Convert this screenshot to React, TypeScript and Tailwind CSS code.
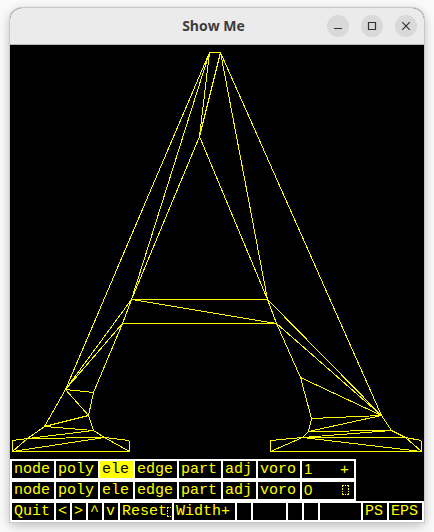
import React from "react";

type Point = [number, number];

const points: Record<string, Point> = {
  a: [209, 52], b: [220, 52], c: [199, 136],
  d: [131, 299], e: [122, 323], f: [267, 299], g: [276, 323],
  h: [65, 389], i: [93, 392], j: [88, 415], k: [44, 426], l: [93, 430],
  m: [27, 438], n: [104, 437],
  lt: [12, 440], lb: [12, 451], mt: [129, 440], mb: [129, 451],
  p: [300, 377], q: [311, 418], r: [381, 415], s: [308, 431], t: [391, 430],
  u: [302, 437], v: [405, 437],
  nt: [270, 440], nb: [270, 451], rt: [421, 440], rb: [421, 451],
};

const edges =
  "a-b a-c b-c a-h a-d c-d c-f b-f b-r d-f d-g e-g d-e f-g d-h e-h e-i h-i h-j i-j h-k k-j k-l j-l k-m m-l m-n l-n " +
  "lt-m lt-lb lb-m lb-n lb-mb mb-n mb-mt mt-n " +
  "g-p g-r f-r p-r p-q q-r q-s s-r s-t r-t s-u u-t u-v t-v u-nt u-nb nt-nb u-rb nb-rb v-rb v-rt rt-rb";

const mesh = edges
  .split(" ")
  .map((edge) => {
    const [from, to] = edge.split("-").map((name) => points[name]);
    return `M${from[0] + 0.5} ${from[1] + 0.5}L${to[0] + 0.5} ${to[1] + 0.5}`;
  })
  .join("");

const layers: [string, string][] = [
  ["node", "w-[42px]"],
  ["poly", "w-[42px]"],
  ["ele", "w-[33px]"],
  ["edge", "w-[42px]"],
  ["part", "w-[42px]"],
  ["adj", "w-[33px]"],
  ["voro", "w-[42px]"],
];

function MissingGlyph() {
  return (
    <svg className="h-[10px] w-[7px] shrink-0" viewBox="0 0 7 10" fill="#ff0" shapeRendering="crispEdges" aria-hidden="true">
      <path d="M0 0H2V1H1V2H0ZM3 0H4V1H3ZM5 0H7V2H6V1H5ZM0 3H1V5H0ZM6 3H7V5H6ZM0 6H1V7H0ZM6 6H7V7H6ZM0 8H1V9H2V10H0ZM3 9H4V10H3ZM6 8H7V10H5V9H6Z" />
    </svg>
  );
}

function Cell({ width, active = false, label, children }: { width: string; active?: boolean; label?: string; children: React.ReactNode }) {
  return (
    <button
      type="button"
      aria-label={label}
      className={`flex h-[17px] shrink-0 items-center overflow-hidden pl-0.5 text-left whitespace-pre ${width} ${active ? "bg-[#ff0] text-black" : "bg-black text-[#ff0]"}`}
    >
      {children}
    </button>
  );
}

function Blank({ width }: { width: string }) {
  return <div className={`h-[17px] bg-black ${width}`} />;
}

function LayerRow({ index, active, mark }: { index: number; active?: string; mark: React.ReactNode }) {
  return (
    <div className="flex w-fit gap-0.5 bg-white p-0.5">
      {layers.map(([name, width]) => (
        <Cell key={name} width={width} active={name === active}>{name}</Cell>
      ))}
      <Cell width="w-[52px]" label={`mesh ${index}`}>
        <span className="flex w-full items-baseline justify-between pr-[5px]">
          <span className="pb-0.5 font-['Liberation_Sans',sans-serif] leading-[15px]">{index}</span>
          {mark}
        </span>
      </Cell>
    </div>
  );
}

function WindowButton({ label, path }: { label: string; path: string }) {
  return (
    <button type="button" aria-label={label} className="flex size-[22px] items-center justify-center rounded-full bg-[#d9d9d9]">
      <svg className="size-2.5" viewBox="0 0 10 10" fill="none" stroke="#333" strokeWidth="1.2">
        <path d={path} />
      </svg>
    </button>
  );
}

export default function App() {
  return (
    <div className="min-h-screen bg-[#fafafa] px-2.5 pt-2 pb-2.5">
      <main className="overflow-hidden rounded-t-xl bg-black shadow-[0_0_0_1px_#c8c8c8,0_3px_12px_rgba(0,0,0,0.28)]">
        <header className="grid grid-cols-[1fr_auto_1fr] items-center border-b border-[#b8b8b8] bg-[#ebebeb] pr-[7px]">
          <h1 className="col-start-2 font-['Open_Sans',sans-serif] text-sm/9 font-bold text-[#3d3d3d]">Show Me</h1>
          <div className="flex justify-end gap-3">
            <WindowButton label="Minimize" path="M1 7.5H9" />
            <WindowButton label="Maximize" path="M1.5 1.5H8.5V8.5H1.5Z" />
            <WindowButton label="Close" path="M1.2 1.2L8.8 8.8M8.8 1.2L1.2 8.8" />
          </div>
        </header>
        <svg className="block w-full" viewBox="10 45 414 414" role="img" aria-label="Triangulated letter A" fill="none" stroke="#ff0" shapeRendering="crispEdges">
          <path d={mesh} />
        </svg>
        <div className="font-['Liberation_Mono',monospace] text-[15px] leading-[17px]">
          <LayerRow index={1} active="ele" mark={<span>+</span>} />
          <LayerRow index={0} mark={<MissingGlyph />} />
          <div className="flex gap-0.5 bg-white p-0.5">
            <Cell width="w-[42px]">Quit</Cell>
            <Cell width="w-[14px]">{"<"}</Cell>
            <Cell width="w-[14px]">{">"}</Cell>
            <Cell width="w-[14px]">^</Cell>
            <Cell width="w-[14px]">v</Cell>
            <Cell width="w-[52px]">Reset<MissingGlyph /></Cell>
            <Cell width="w-[61px]">Width+</Cell>
            <Blank width="w-[14px]" />
            <Blank width="w-[33px]" />
            <Blank width="w-[14px]" />
            <Blank width="w-[14px]" />
            <Blank width="flex-1" />
            <Cell width="w-[24px]">PS</Cell>
            <Cell width="w-[33px]">EPS</Cell>
          </div>
        </div>
      </main>
    </div>
  );
}
